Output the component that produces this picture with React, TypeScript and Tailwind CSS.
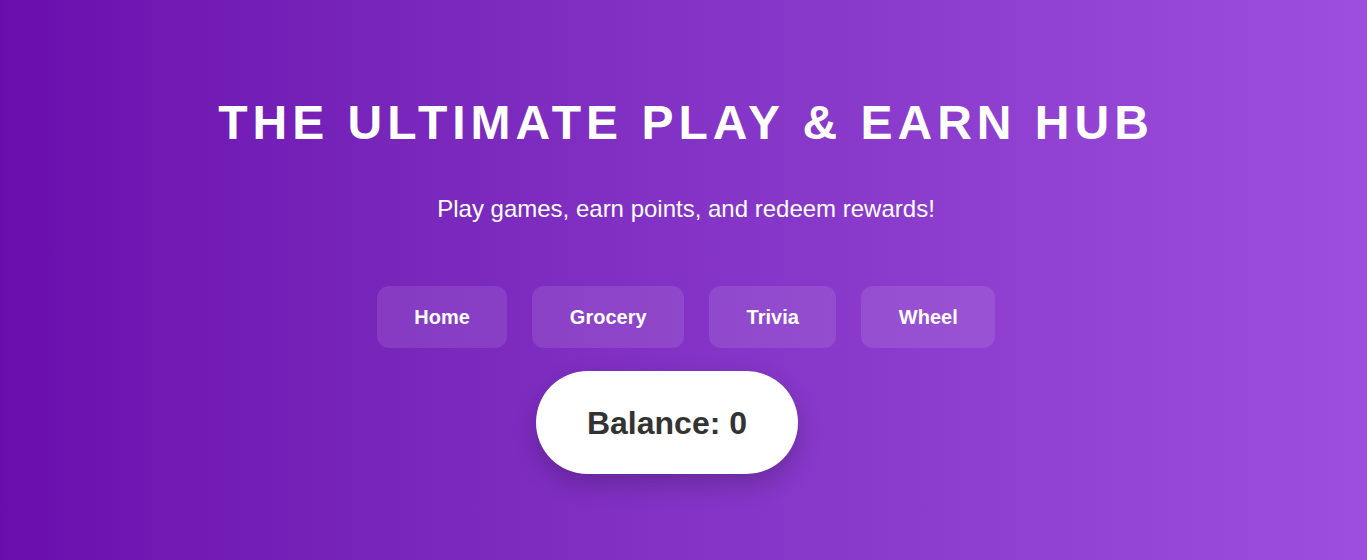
const TABS = ["Home", "Grocery", "Trivia", "Wheel"];

export default function App() {
  return (
    <div className="min-h-[560px] w-full bg-gradient-to-r from-[#6a0dad] to-[#9d4edd] font-['Liberation_Sans',Arial,sans-serif] text-white">
      <div className="flex flex-col items-center pt-[95px] pl-[5px]">
        <h1 className="text-[48px] font-bold leading-[56px] tracking-[5px] uppercase">
          The Ultimate Play &amp; Earn Hub
        </h1>
        <p className="mt-[44px] text-[24px] leading-[28px]">
          Play games, earn points, and redeem rewards!
        </p>

        <nav className="mt-[63px] flex gap-[25px]">
          {TABS.map((t) => (
            <button
              key={t}
              className="h-[62px] px-[37.5px] rounded-xl bg-white/10 text-[20px] font-bold text-white"
            >
              {t}
            </button>
          ))}
        </nav>

        <div className="mt-[23px] mr-[38px] h-[103px] px-[51px] rounded-full bg-white flex items-center shadow-[0_10px_25px_rgba(0,0,0,0.2)]">
          <span className="text-[32px] font-bold text-[#333]">Balance: 0</span>
        </div>
      </div>
    </div>
  );
}
